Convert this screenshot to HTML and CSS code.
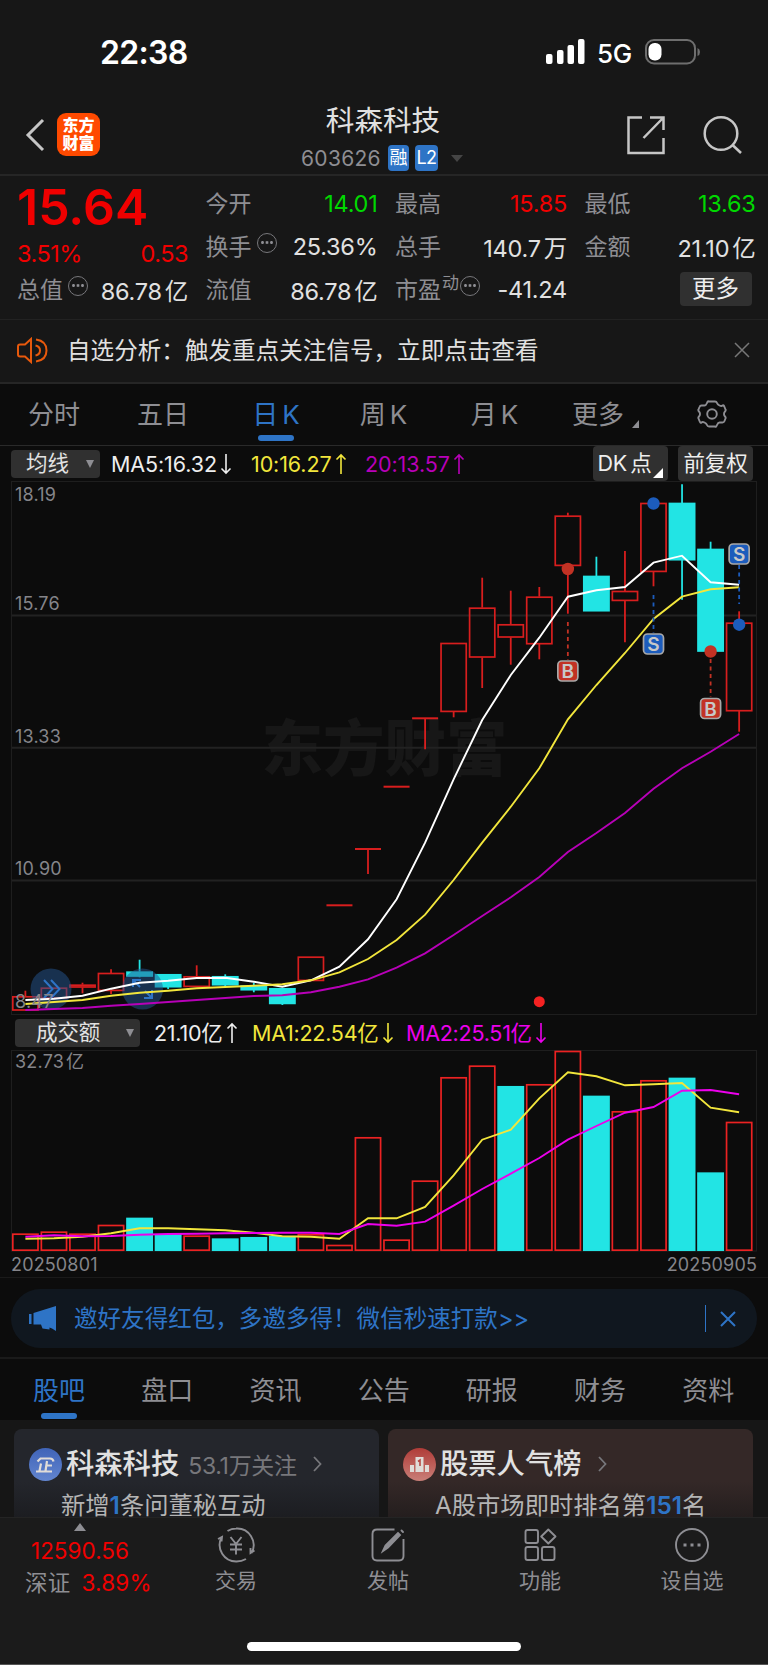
FILE: index.html
```html
<!DOCTYPE html>
<html lang="zh-CN">
	<head>
		<meta charset="utf-8">
		<title>科森科技 603626</title>
		<link rel="stylesheet" href="styles.css">
	</head>
	<body>
		<div class="statusbar">
			<span class="clock">22:38</span>
			<svg class="signal" width="40" height="26" viewBox="0 0 40 26" fill="#fff">
				<rect x="0" y="15" width="6.500" height="10" rx="2"/>
				<rect x="11" y="11" width="6.500" height="14" rx="2"/>
				<rect x="21.500" y="6" width="6.500" height="19" rx="2"/>
				<rect x="32" y="0" width="6.500" height="25" rx="2"/>
			</svg>
			<span class="net">5G</span>
			<svg class="battery" width="56" height="26" viewBox="0 0 56 26">
				<rect x="1" y="1" width="49" height="23.500" rx="8" fill="none" stroke="#6e6e6e" stroke-width="2"/>
				<rect x="3.500" y="4" width="13" height="17.500" rx="6" fill="#fff"/>
				<path d="M52.500 9v8q2.500-1 2.500-4t-2.500-4z" fill="#6e6e6e"/>
			</svg>
		</div>

		<div class="navbar">
			<svg class="back" width="20" height="34" viewBox="0 0 20 34" fill="none" stroke="#c6c6c6" stroke-width="3"><path d="M18 2L3 17l15 15"/></svg>
			<div class="logo"><span>东方</span><span>财富</span></div>
			<div class="title">
				<h1>科森科技</h1>
				<div class="code"><span class="num">603626</span><b>融</b><b class="l2">L2</b><i></i></div>
			</div>
			<svg class="share" width="40" height="40" viewBox="0 0 40 40" fill="none" stroke="#c6c6c6" stroke-width="2.500"><path d="M16 2.500H2.500v35.500H37.500V23M24 2.500h13.500V15M37 3L17.500 23"/></svg>
			<svg class="search" width="40" height="40" viewBox="0 0 40 40" fill="none" stroke="#c6c6c6" stroke-width="2.500"><circle cx="18" cy="18.500" r="16.300"/><path d="M29.500 30l8.500 8"/></svg>
		</div>

		<div class="quote">
			<div class="main-col">
				<div class="price">15.64</div>
				<div class="chg"><span>3.51%</span><span>0.53</span></div>
				<div class="cell"><label>总值</label><em class="dots"></em><span>86.78<u>亿</u></span></div>
			</div>
			<div class="col">
				<div class="cell"><label>今开</label><span class="down">14.01</span></div>
				<div class="cell"><label>换手</label><em class="dots"></em><span>25.36%</span></div>
				<div class="cell"><label>流值</label><span>86.78<u>亿</u></span></div>
			</div>
			<div class="col">
				<div class="cell"><label>最高</label><span class="up">15.85</span></div>
				<div class="cell"><label>总手</label><span>140.7<u>万</u></span></div>
				<div class="cell"><label>市盈</label><sup>动</sup><em class="dots near"></em><span>-41.24</span></div>
			</div>
			<div class="col">
				<div class="cell"><label>最低</label><span class="down">13.63</span></div>
				<div class="cell"><label>金额</label><span>21.10<u>亿</u></span></div>
				<div class="cell"><button class="more">更多</button></div>
			</div>
		</div>

		<div class="notice">
			<svg width="32" height="27" viewBox="0 0 32 27" fill="none" stroke="#e8590c" stroke-width="2"><path d="M14 2v23L8 19.500H3Q1 19.500 1 17.500v-8Q1 7.500 3 7.500H8zM18.500 8.500q4.500 1 4.500 5t-4.500 5M19 2.500q10.500 1.500 10.500 11t-10.500 11"/></svg>
			<p>自选分析：触发重点关注信号，立即点击查看</p>
			<svg class="x" width="16" height="16" viewBox="0 0 16 16" stroke="#777" stroke-width="1.500"><path d="M1 1l14 14M15 1L1 15"/></svg>
		</div>

		<div class="periods">
			<a>分时</a><a>五日</a><a class="on">日<s>K</s></a><a>周<s>K</s></a><a>月<s>K</s></a><a class="drop">更多<i></i></a>
			<a><svg width="30" height="28" viewBox="0 0 30 28" fill="none" stroke="#8e8e93" stroke-width="1.900"><path d="M12 1.500h6q1.500 0 2 1.500t2.500 2.500 3 0 2 1.500l1 2.500q.5 1-.5 2t-1 2.500 1 2.500.5 2l-1 2.500q-.5 1.500-2 1.500t-3 0-2.500 2.500-2 1.500h-6q-1.500 0-2-1.500T7.500 22.500t-3 0-2-1.500l-1-2.500q-.5-1 .5-2T3 14t-1-2.500-.5-2l1-2.500q.5-1.500 2-1.500t3 0T10 3t2-1.500z" stroke-linejoin="round"/><circle cx="15" cy="14" r="4.800"/></svg></a>
		</div>

		<div class="ma-row">
			<div class="chip">均线<i></i></div>
			<span class="w">MA5:16.32<svg class="arr"><use href="#dn"/></svg></span>
			<span class="y">10:16.27<svg class="arr"><use href="#up"/></svg></span>
			<span class="m">20:13.57<svg class="arr"><use href="#up"/></svg></span>
			<div class="btn dk">DK<u>点</u><i></i></div>
			<div class="btn">前复权</div>
		</div>
		<svg class="defs" width="0" height="0">
			<symbol id="up" viewBox="0 0 12 22"><path d="M6 21V2M1.500 6.500L6 2l4.500 4.500" fill="none" stroke="currentColor" stroke-width="1.600"/></symbol>
			<symbol id="dn" viewBox="0 0 12 22"><path d="M6 1v19M1.500 15.500L6 20l4.500-4.500" fill="none" stroke="currentColor" stroke-width="1.600"/></symbol>
		</svg>

		<svg id="kline" class="chart" width="768" height="534" viewBox="0 481 768 534"></svg>

		<div class="vol-row">
			<div class="chip">成交额<i></i></div>
			<span class="w">21.10亿<svg class="arr"><use href="#up"/></svg></span>
			<span class="y">MA1:22.54亿<svg class="arr"><use href="#dn"/></svg></span>
			<span class="m">MA2:25.51亿<svg class="arr"><use href="#dn"/></svg></span>
		</div>
		<svg id="volume" class="chart" width="768" height="202" viewBox="0 1050 768 202"></svg>
		<div class="dates"><span>20250801</span><span>20250905</span></div>

		<div class="promo">
			<svg width="28" height="25" viewBox="0 0 28 25" fill="#2e74c6"><path d="M0 8h2.500v10H0zM4.500 7L27 0v25l-4-2.500-2.500-1v2l-7-1-1.500-4H4.500z"/></svg>
			<p>邀好友得红包，多邀多得！微信秒速打款&gt;&gt;</p>
			<svg class="x" width="16" height="16" viewBox="0 0 16 16" stroke="#2e74c6" stroke-width="2"><path d="M1 1l14 14M15 1L1 15"/></svg>
		</div>

		<div class="tabs">
			<a class="on">股吧</a><a>盘口</a><a>资讯</a><a>公告</a><a>研报</a><a>财务</a><a>资料</a>
		</div>

		<div class="cards">
			<div class="card blue">
				<div class="head">
					<svg width="33" height="33" viewBox="0 0 33 33">
						<defs><linearGradient id="gb" x2="0" y2="1"><stop stop-color="#4064b8"/><stop offset="1" stop-color="#6285cf"/></linearGradient></defs>
						<circle cx="16.500" cy="16.500" r="16.500" fill="url(#gb)"/>
						<path d="M8.500 13.500l3-3h9.500q3 0 3.500 3M18 13l-1.500 10M17 17.500h6M12 15.500L10.500 23M7 23.500h16" fill="none" stroke="#e0dcd8" stroke-width="2.200"/>
					</svg>
					<b>科森科技</b><small>53.1万关注</small>
					<svg class="chev" width="9" height="16" viewBox="0 0 9 16"><path d="M1 1l6.500 7L1 15"/></svg>
				</div>
				<p>新增<em>1</em>条问董秘互动</p>
			</div>
			<div class="card red">
				<div class="head">
					<svg width="33" height="33" viewBox="0 0 33 33">
						<defs><linearGradient id="gr" x2="0" y2="1"><stop stop-color="#b03c38"/><stop offset="1" stop-color="#c97f78"/></linearGradient></defs>
						<circle cx="16.500" cy="16.500" r="16.500" fill="url(#gr)"/>
						<path d="M7 17h4v7H7zM12.500 9h8v15h-8zM22 17h4v7h-4z" fill="#e0dcd8"/>
						<path d="M15 13.500l2-1.500v6" fill="none" stroke="#b54a45" stroke-width="1.600"/>
					</svg>
					<b>股票人气榜</b>
					<svg class="chev" width="9" height="16" viewBox="0 0 9 16"><path d="M1 1l6.500 7L1 15"/></svg>
				</div>
				<p>A股市场即时排名第<em>151</em>名</p>
			</div>
		</div>

		<div class="toolbar">
			<div class="index">
				<i></i>
				<span>12590.56</span>
				<div><label>深证</label><span>3.89%</span></div>
			</div>
			<div class="tool">
				<svg width="40" height="36" viewBox="0 0 40 36"><path d="M11.500 4Q15.500 1.500 20 1.500A16.500 16.500 0 0 1 35.500 26M30 32Q25.500 34.500 20.500 34.500A16.500 16.500 0 0 1 5.500 10.500M2 12l4-2-.5 4.500M38.500 23.500l-4 2.500 0-5M14.500 10l5.500 7 5.500-7M20 17v10.500M14 17.500h12M14 22.500h12"/></svg>
				<span>交易</span>
			</div>
			<div class="tool">
				<svg width="40" height="36" viewBox="0 0 40 36"><path d="M26.500 2.500H9q-4.500 0-4.500 4.500v22q0 4.500 4.500 4.500h22q4.500 0 4.500-4.500V12"/><path d="M15 24l2.500-5.500L30 6l2 2L20 20.500zM33.500 3.500l1.500 1.500" fill="#8e8e93" stroke-linecap="round"/></svg>
				<span>发帖</span>
			</div>
			<div class="tool">
				<svg width="40" height="36" viewBox="0 0 40 36"><rect x="5.500" y="3" width="12.500" height="13" rx="2"/><rect x="5.500" y="20" width="12.500" height="13" rx="2"/><rect x="22" y="20" width="12.500" height="13" rx="2"/><path d="M28.300 2.500L35.500 9.500 28.300 16.500 21.200 9.500z" stroke-linejoin="round"/></svg>
				<span>功能</span>
			</div>
			<div class="tool">
				<svg width="40" height="36" viewBox="0 0 40 36"><circle cx="20" cy="18" r="16"/><path d="M11.500 16.500h3v3h-3zM18.500 16.500h3v3h-3zM25.500 16.500h3v3h-3z" fill="#8e8e93" stroke="none"/></svg>
				<span>设自选</span>
			</div>
			<div class="home"></div>
		</div>
		<script src="chart.js"></script>
	</body>
</html>
```
FILE: styles.css
```css
* {
	box-sizing: border-box;
}
body {
	margin: 0;
	width: 768px;
	height: 1665px;
	overflow: hidden;
	background: #0c0c0c;
	color: #e1e1e1;
	font-family: Inter, "Noto Sans CJK SC", sans-serif;
	font-size: 23.5px;
}
svg {
	display: block;
	flex: none;
}
i, em, u, s {
	font-style: normal;
	text-decoration: none;
}
p, h1 {
	margin: 0;
	font-weight: 400;
}

/* status bar + title */
.statusbar {
	height: 98px;
	background: #171717;
	display: flex;
	align-items: flex-start;
	padding: 39px 67px 0 100px;
	color: #fff;
}
.clock {
	flex: 1;
	font-size: 32px;
	line-height: 28px;
	font-weight: 600;
	letter-spacing: -.7px;
}
.net {
	font-size: 26px;
	line-height: 28px;
	font-weight: 500;
	margin: 1px 13px 0 11px;
	letter-spacing: -.3px;
}
.navbar {
	height: 78px;
	background: #171717;
	border-bottom: 2px solid #262626;
	display: flex;
	align-items: flex-start;
	padding: 0 25px;
}
.back {
	margin-top: 20px;
}
.logo {
	width: 43px;
	height: 43px;
	margin: 15px 0 0 12px;
	border-radius: 9px;
	background: #ff4a00;
	color: #fff;
	font-size: 16px;
	line-height: 18px;
	font-weight: 900;
	text-align: center;
	padding-top: 3px;
}
.logo span {
	display: block;
}
.title {
	flex: 1;
	padding: 4px 0 0 40px;
	text-align: center;
}
.title h1 {
	font-size: 28.6px;
	line-height: 38px;
}
.code {
	display: flex;
	justify-content: center;
	align-items: center;
	margin-top: 5px;
	height: 26px;
	padding-right: 2px;
	color: #8e8e93;
}
.code .num {
	font-size: 21px;
	letter-spacing: .3px;
	margin-right: 7px;
}
.code b {
	width: 21px;
	height: 26px;
	margin-right: 6px;
	border-radius: 4px;
	background: #2e74c6;
	color: #fff;
	font-size: 18px;
	line-height: 26px;
	font-weight: 400;
	text-align: center;
}
.code .l2 {
	width: 23px;
	margin-right: 13px;
	letter-spacing: -.7px;
}
.code i {
	border: 6px solid transparent;
	border-top: 7px solid #454545;
	border-bottom: 0;
}
.share {
	margin: 17px 37px 0 0;
}
.search {
	margin-top: 17px;
}

/* quote */
.quote {
	height: 144px;
	background: #171717;
	border-bottom: 1px solid #222;
	display: grid;
	grid-template-columns: 171px 172px 172px 171px;
	column-gap: 17.5px;
	padding: 7px 0 0 17px;
}
.cell {
	display: flex;
	height: 43px;
	align-items: center;
	white-space: nowrap;
}
.cell label {
	color: #8e8e93;
	font-size: 23px;
	margin-top: -5px;
}
.cell span {
	margin: -2px 0 0 auto;
	letter-spacing: -.25px;
}
.cell u {
	margin-left: 3px;
}
.cell .up {
	color: #f00000;
}
.cell .down {
	color: #00d800;
}
.cell sup {
	font-size: 17px;
	line-height: 20px;
	color: #8e8e93;
	margin: -15px 0 0 1px;
}
.dots {
	width: 20px;
	height: 20px;
	margin: -10px 0 0 5px;
	border: 1.5px solid #77777b;
	border-radius: 50%;
	background: radial-gradient(circle, #8e8e93 1.2px, transparent 1.6px) center / 4.5px 17px repeat-x;
	background-clip: content-box;
	padding: 0 2px;
}
.dots.near {
	margin-left: 1px;
}
.price {
	height: 43px;
	line-height: 49px;
	font-size: 50px;
	font-weight: 600;
	color: #f00000;
}
.chg {
	display: flex;
	justify-content: space-between;
	height: 43px;
	line-height: 55px;
	letter-spacing: -.5px;
	color: #f00000;
}
.more {
	width: 72px;
	height: 34px;
	margin: -4px 4px 0 auto;
	padding: 0;
	border: 0;
	border-radius: 4px;
	background: #303030;
	color: #eee;
	font: inherit;
	line-height: 32px;
}

.notice {
	height: 64px;
	background: #171717;
	border-bottom: 2px solid #262626;
	display: flex;
	align-items: center;
	padding: 0 18px 2px 17px;
}
.notice p {
	flex: 1;
	margin: -2px 0 0 18px;
	letter-spacing: .08px;
}

/* period tabs */
.periods {
	height: 62px;
	border-bottom: 1px solid #2a2a2a;
	display: grid;
	grid-template-columns: 108px 110px 115px 100px 122px 97px 116px;
	text-align: center;
	font-size: 26px;
	line-height: 61px;
	color: #8e8e93;
}
.periods a {
	position: relative;
}
.periods s {
	margin-left: 4px;
	letter-spacing: -1px;
}
.periods svg {
	margin: 16px 0 0 45px;
}
.periods .drop {
	white-space: nowrap;
	padding-left: 17px;
	text-align: left;
}
.periods .drop i {
	display: inline-block;
	margin-left: 8px;
	border-left: 7px solid transparent;
	border-bottom: 8px solid #8e8e93;
	vertical-align: -4px;
}
.on {
	color: #2e74c6;
}
.on::after {
	content: "";
	position: absolute;
	left: 50%;
	bottom: 4px;
	width: 36px;
	height: 6px;
	margin-left: -18px;
	border-radius: 3px;
	background: #2e74c6;
}

/* indicator rows */
.ma-row, .vol-row {
	height: 35px;
	display: flex;
	align-items: center;
	font-size: 21.5px;
	letter-spacing: -.1px;
	white-space: nowrap;
	padding: 1px 15px 0 11px;
}
.vol-row {
	padding: 0 0 0 15px;
}
.chip {
	position: relative;
	width: 89px;
	height: 28px;
	padding-left: 15px;
	border-radius: 4px;
	background: #303030;
	line-height: 27px;
}
.vol-row .chip {
	width: 125px;
	padding-left: 21px;
}
.chip i {
	position: absolute;
	right: 6px;
	top: 10px;
	border: 4px solid transparent;
	border-top: 8px solid #8e8e93;
	border-bottom: 0;
}
.ma-row span, .vol-row span {
	display: flex;
	align-items: center;
	line-height: 26px;
}
.arr {
	width: 12px;
	height: 22px;
	margin-left: 3px;
}
.w {
	width: 140px;
	margin-left: 11px;
	color: #eee;
}
.y {
	width: 114px;
	color: #f2e63c;
}
.m {
	color: #b800b8;
}
.ma-row .m {
	flex: 1;
}
.vol-row span {
	letter-spacing: -.25px;
}
.vol-row .w {
	width: 98px;
	margin-left: 14px;
}
.vol-row .y {
	width: 154px;
}
.vol-row .m {
	color: #ec00ec;
}
.btn {
	position: relative;
	width: 75px;
	height: 35px;
	margin: -1px 0 0 10px;
	border-radius: 4px;
	background: #303030;
	color: #eee;
	line-height: 35px;
	text-align: center;
}
.dk {
	padding-right: 12px;
}
.dk u {
	margin-left: 3px;
}
.dk i {
	position: absolute;
	right: 5px;
	bottom: 3px;
	border-left: 10px solid transparent;
	border-bottom: 10px solid #fff;
}
.defs {
	position: absolute;
}
.chart text {
	font-size: 18px;
	fill: #85858a;
}
.chart .axis {
	letter-spacing: .2px;
}
.chart .mark {
	font-family: "Noto Sans CJK SC", sans-serif;
	font-size: 61.5px;
	font-weight: 900;
	fill: #171717;
}
.chart .flag {
	font-size: 19px;
	font-weight: 600;
	fill: #c8c8c8;
	text-anchor: middle;
}
.dates {
	height: 26px;
	border-bottom: 1px solid #1a1a1a;
	display: flex;
	justify-content: space-between;
	padding: 0 11px;
	font-size: 18px;
	letter-spacing: .15px;
	line-height: 25px;
	color: #85858a;
}

.promo {
	position: relative;
	height: 59px;
	margin: 11px 11px 9px;
	border-radius: 30px;
	background: #10171f;
	display: flex;
	align-items: center;
	padding: 0 21px 0 18px;
	color: #2e74c6;
}
.promo p {
	flex: 1;
	margin: -3px 0 0 17px;
	letter-spacing: .05px;
}
.promo .x {
	margin-left: 14px;
}
.promo p::after {
	content: "";
	float: right;
	width: 1.5px;
	height: 27px;
	margin-top: 5px;
	background: #2e74c6;
}
.tabs {
	height: 63px;
	border-top: 2px solid #1a1a1a;
	display: grid;
	grid-template-columns: repeat(7, 108.2px);
	padding-left: 5px;
	text-align: center;
	font-size: 26px;
	line-height: 63px;
	color: #8e8e93;
}
.tabs a {
	position: relative;
}
.tabs a.on {
	color: #2e74c6;
}
.tabs .on::after {
	bottom: 3px;
}
.cards {
	height: 97px;
	background: #161616;
	display: flex;
	gap: 9px;
	padding: 9px 15px 0 14px;
}
.card {
	flex: 1;
	height: 88px;
	border-radius: 8px 8px 0 0;
	padding: 16px 15px 0;
	white-space: nowrap;
}
.blue {
	background: linear-gradient(#24262c 60%, #1c1d21);
}
.red {
	background: linear-gradient(#342827 60%, #241e1e);
}
.head {
	display: flex;
	align-items: center;
	height: 38px;
}
.head b {
	font-size: 28.3px;
	font-weight: 500;
	line-height: 34px;
	margin: 0 0 0 4px;
}
.head small {
	font-size: 23px;
	letter-spacing: -.3px;
	color: #77777b;
	margin: 0 0 0 9px;
}
.chev {
	margin: 0 0 0 16px;
	fill: none;
	stroke: #77777b;
	stroke-width: 1.8;
}
.card p {
	margin: 5px 0 0 32px;
	font-size: 24.3px;
	line-height: 34px;
	color: #b4b4b4;
}
.card em {
	color: #2e74c6;
	font-weight: 600;
}

/* bottom bar */
.toolbar {
	position: relative;
	height: 148px;
	background: #1b1b1b;
	border-top: 1px solid #242424;
	border-bottom: 1px solid #555;
	display: grid;
	grid-template-columns: 160px repeat(4, 152px);
	color: #8e8e93;
}
.index {
	padding: 5px 0 0 25px;
	font-size: 22.5px;
	line-height: 32px;
}
.index i {
	display: block;
	width: 0;
	margin: 0 0 4px 49px;
	border: 6.5px solid transparent;
	border-bottom: 8px solid #8e8e93;
	border-top: 0;
}
.index span {
	color: #f00000;
}
.index > span {
	margin-left: 6px;
}
.index label {
	margin-right: 11px;
}
.index div {
	letter-spacing: .2px;
}
.tool {
	display: flex;
	flex-direction: column;
	align-items: center;
	padding-top: 9px;
}
.tool svg {
	fill: none;
	stroke: #8e8e93;
	stroke-width: 1.9;
}
.tool span {
	font-size: 21px;
	line-height: 30px;
	margin-top: 3px;
}
.home {
	position: absolute;
	left: 247px;
	bottom: 13px;
	width: 274px;
	height: 9px;
	border-radius: 5px;
	background: #fff;
}
```
FILE: chart.js
```js
var STEP = 28.55, FIRST = 25.4, W = 26;
var RED = '#d81e1e', CYAN = '#22e4e4';

// [up?, body top, body bottom, wick top, wick bottom]
var candles = [
	[1, 996.3, 1010.3, 990.7, 1010], [1, 987.7, 998.3, 987.7, 998], [1, 984.7, 987.3, 982.7, 993.3],
	[1, 973, 990.7, 969.3, 994], [0, 971.7, 976.3, 959.7, 977.3], [0, 974.3, 987, 974, 989],
	[1, 976.3, 986.7, 965.3, 986.7], [0, 976.3, 985, 974.3, 986.3], [0, 985.7, 990, 982.7, 992.3],
	[0, 988.3, 1003.7, 988, 1005], [1, 956.7, 980.7, 956.7, 980.7], [1, 905.3, 905.3, 905, 905],
	[1, 849, 849, 849, 874], [1, 786.7, 786.7, 786, 786], [1, 718.3, 718.3, 718, 749.3],
	[1, 643, 711.7, 643, 717.3], [1, 607.7, 657.3, 577.7, 688], [1, 624.3, 637.3, 590.7, 664.7],
	[1, 596.7, 644, 587, 659.3], [1, 515.7, 565.7, 512.7, 613.7], [0, 576, 611, 556.7, 611],
	[1, 591, 600.7, 551, 642.3], [1, 503, 571.7, 503, 586.3], [0, 503, 560, 484.3, 599.7],
	[0, 549, 651.3, 541.7, 651], [1, 622.7, 711, 611.3, 731.7]
];
var ma5 = [1000, 998.7, 995.7, 988.7, 982.7, 980.7, 978, 977.7, 981.7, 986.7, 980.3, 966.7, 939.3, 899.3, 842.7, 779.3, 720, 675, 637.7, 596.7, 590.3, 587, 562.7, 555.7, 582.3, 584.7];
var ma10 = [1004, 1002, 1000, 995.7, 992.7, 990.7, 988.3, 987, 985.7, 984.3, 980.3, 972.3, 959, 940, 914.7, 880, 842.7, 806.7, 768.3, 719.3, 685, 653, 619, 596.7, 589.3, 587.3];
var ma20 = [1010, 1009, 1008, 1005.7, 1004, 1002, 1000, 998, 996, 995.3, 992.3, 986.7, 979.3, 967.7, 953.3, 935, 916, 897.3, 877, 852, 833, 813, 788.7, 768.3, 751.7, 734];

var vols = [1233.7, 1231.7, 1233.7, 1225, 1218, 1234.3, 1235.7, 1238.7, 1237.3, 1236.3, 1234.3, 1245, 1137.3, 1239.7, 1180.7, 1077.3, 1065.7, 1086.3, 1084.3, 1051, 1096, 1111.3, 1080.3, 1078, 1172.7, 1122];
var volDown = [4, 5, 7, 8, 9, 17, 20, 23, 24];
var vma1 = [1238.7, 1238.3, 1236.7, 1233.3, 1228.3, 1228.3, 1229.3, 1230.3, 1232.7, 1236.3, 1236.7, 1238.7, 1218.3, 1218.3, 1207, 1175.3, 1139.7, 1129.7, 1098.3, 1072.3, 1076.3, 1085.3, 1084.3, 1083, 1107.7, 1112.3];
var vma2 = [1236.7, 1235.3, 1236.3, 1236, 1234.7, 1234, 1233.7, 1233.3, 1233, 1232.7, 1232.7, 1234, 1224, 1225.7, 1221.7, 1205.7, 1189, 1173.7, 1158, 1139.7, 1126, 1112.7, 1107, 1090.7, 1090, 1094.3];

function cx(i) {
	return FIRST + i * STEP;
}
function seg(x1, y1, x2, y2, color, w, dash) {
	return '<line x1="' + x1 + '" y1="' + y1 + '" x2="' + x2 + '" y2="' + y2 + '" stroke="' + color + '" stroke-width="' + w + '"' + (dash ? ' stroke-dasharray="4 3.5"' : '') + '/>';
}
function box(x, y, w, h, fill, stroke, rx) {
	return '<rect x="' + x + '" y="' + y + '" width="' + w + '" height="' + h + '" fill="' + fill + '" stroke="' + stroke + '" stroke-width="1.7" rx="' + (rx || 0) + '"/>';
}
function frame(y, h) {
	return '<rect x="11.5" y="' + y + '" width="745" height="' + h + '" fill="none" stroke="#1e1e1e"/>';
}
function curve(ys, color) {
	var pts = ys.map(function(y, i) { return cx(i).toFixed(1) + ',' + y; });
	return '<polyline points="' + pts.join(' ') + '" fill="none" stroke="' + color + '" stroke-width="1.9"/>';
}
function label(x, y, t, cls) {
	return '<text x="' + x + '" y="' + y + '" class="' + (cls || 'axis') + '">' + t + '</text>';
}
function dot(x, y, r, color) {
	return '<circle cx="' + x + '" cy="' + y + '" r="' + r + '" fill="' + color + '"/>';
}
function flag(i, y, t, dotY, y1, y2) {
	var c = t == 'B' ? '#c23224' : '#1c5cbc';
	return seg(cx(i), y1, cx(i), y2, c, 1.8, true) + dot(cx(i), dotY, 6.2, c) +
		box(cx(i) - 10, y - 10, 20, 20, c, '#a8a8a8', 4) + label(cx(i), y + 7, t, 'flag');
}

var k = frame(481.5, 533);
k += label(261.5, 771, '东方财富', 'mark');
[615.5, 747.8, 880.5].forEach(function(y) {
	k += seg(12, y, 756, y, '#222', 2);
});
candles.forEach(function(c, i) {
	var x = cx(i), color = c[0] ? RED : CYAN;
	if (c[2] > c[1])
		k += box(x - W / 2 + .4, c[1] + .5, W - .8, c[2] - c[1] - .8, c[0] ? 'none' : CYAN, color);
	else
		k += seg(x - W / 2, c[1], x + W / 2, c[1], color, 2);
	k += seg(x, c[3], x, c[1], color, 1.8) + seg(x, c[2], x, c[4], color, 1.8);
});
k += dot(51, 989, 20.5, 'rgba(35,85,145,.5)') + dot(142.5, 989, 20.5, 'rgba(35,85,145,.5)');
k += '<path d="M44 980l8.500 9-8.500 9M51 980l8.500 9-8.500 9M133 987v-7h8M133 980l7 7M144 998h8v-8M152 998l-7-7" fill="none" stroke="#2e74c6" stroke-width="2"/>';
k += curve(ma5, '#fff') + curve(ma10, '#f2e63c') + curve(ma20, '#b800b8');
k += flag(19, 671, 'B', 569, 622, 660) + flag(22, 644, 'S', 503.5, 595, 633);
k += flag(24, 708.5, 'B', 651.5, 659, 697) + flag(25, 554, 'S', 624.7, 565, 604);
k += dot(539.3, 1001.7, 5.5, '#f52222');
k += label(15, 501, '18.19') + label(15, 609.5, '15.76') + label(15, 742.5, '13.33') + label(15, 875, '10.90') + label(15, 1008, '8.47');
document.getElementById('kline').innerHTML = k;

var v = frame(1050.5, 200.5);
vols.forEach(function(y, i) {
	var down = volDown.indexOf(i) >= 0;
	v += box(cx(i) - W / 2 + .4, y + .5, W - .8, 1250.5 - y - .8, down ? CYAN : 'none', down ? CYAN : '#ec2222');
});
v += curve(vma1, '#f2e63c') + curve(vma2, '#ec00ec');
v += label(15, 1068, '32.73<tspan dx="2">亿</tspan>');
document.getElementById('volume').innerHTML = v;
```
